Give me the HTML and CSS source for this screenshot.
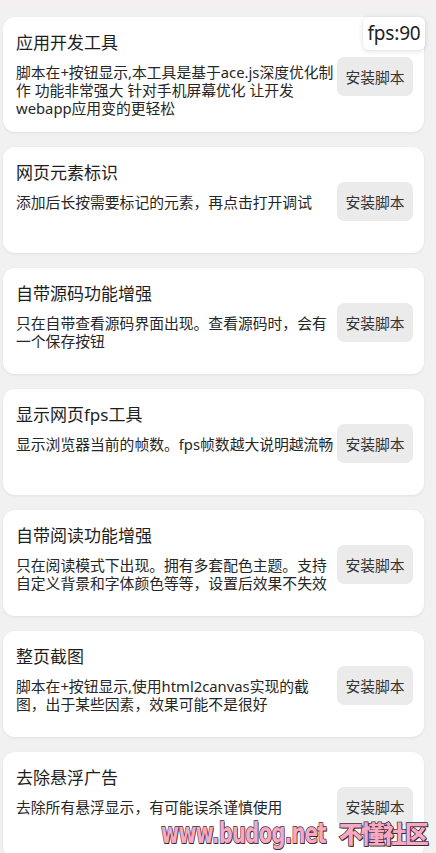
FILE: index.html
```html
<!DOCTYPE html>
<html lang="zh-CN">
<head>
    <meta charset="UTF-8">
    <meta name="viewport" content="width=device-width, initial-scale=1.0">
    <title>脚本列表</title>
    <link rel="stylesheet" href="styles.css">
</head>
<body>
    <div class="topline"></div>
    <div class="fps">fps:90</div>
    <div class="list">
        <div class="card">
            <div class="info">
                <h3 class="title">应用开发工具</h3>
                <p class="desc">脚本在+按钮显示,本工具是基于ace.js深度优化制作 功能非常强大 针对手机屏幕优化 让开发webapp应用变的更轻松</p>
            </div>
            <button class="install">安装脚本</button>
        </div>
        <div class="card">
            <div class="info">
                <h3 class="title">网页元素标识</h3>
                <p class="desc">添加后长按需要标记的元素，再点击打开调试</p>
            </div>
            <button class="install">安装脚本</button>
        </div>
        <div class="card">
            <div class="info">
                <h3 class="title">自带源码功能增强</h3>
                <p class="desc">只在自带查看源码界面出现。查看源码时，会有一个保存按钮</p>
            </div>
            <button class="install">安装脚本</button>
        </div>
        <div class="card">
            <div class="info">
                <h3 class="title">显示网页fps工具</h3>
                <p class="desc">显示浏览器当前的帧数。fps帧数越大说明越流畅</p>
            </div>
            <button class="install">安装脚本</button>
        </div>
        <div class="card">
            <div class="info">
                <h3 class="title">自带阅读功能增强</h3>
                <p class="desc">只在阅读模式下出现。拥有多套配色主题。支持自定义背景和字体颜色等等，设置后效果不失效</p>
            </div>
            <button class="install">安装脚本</button>
        </div>
        <div class="card">
            <div class="info">
                <h3 class="title">整页截图</h3>
                <p class="desc">脚本在+按钮显示,使用html2canvas实现的截图，出于某些因素，效果可能不是很好</p>
            </div>
            <button class="install">安装脚本</button>
        </div>
        <div class="card">
            <div class="info">
                <h3 class="title">去除悬浮广告</h3>
                <p class="desc">去除所有悬浮显示，有可能误杀谨慎使用</p>
            </div>
            <button class="install">安装脚本</button>
        </div>
    </div>
    <div class="watermark"><span class="wm-site">www.budog.net</span><span class="wm-name">不懂社区</span></div>
</body>
</html>
```

FILE: styles.css
```css
body {
    margin: 0;
    padding: 0;
    background-color: #f1f1f1;
    font-family: "Noto Sans", "Noto Sans CJK SC", sans-serif;
    color: #222;
    overflow: hidden;
}
.topline {
    height: 4px;
    background-color: #f6eef0;
}
.list {
    padding: 13px 12px 0 3px;
}
.card {
    display: flex;
    align-items: center;
    min-height: 106px;
    box-sizing: border-box;
    margin-bottom: 15px;
    padding: 15px 11px 15px 13px;
    background-color: #fff;
    border-radius: 12px;
    box-shadow: 0 1px 3px rgba(0,0,0,0.07);
}
.info {
    flex: 1;
    align-self: flex-start;
    min-width: 0;
    margin-right: 2px;
}
.title {
    margin: 0;
    font-size: 17px;
    font-weight: normal;
    line-height: 22px;
    color: #1e1e1e;
}
.desc {
    margin: 9px 0 0;
    font-size: 14.8px;
    line-height: 18px;
    color: #262626;
}
.install {
    flex: none;
    width: 76px;
    height: 39px;
    margin-top: 3px;
    padding: 0;
    border: none;
    border-radius: 7px;
    background-color: #ebebeb;
    font-family: inherit;
    font-size: 14.8px;
    color: #333;
}
.fps {
    position: absolute;
    top: 17px;
    right: 11px;
    width: 62px;
    height: 33px;
    line-height: 33px;
    text-align: center;
    background-color: #fff;
    border-radius: 6px;
    box-shadow: 0 1px 5px rgba(0,0,0,0.15);
    font-size: 19px;
    letter-spacing: -0.2px;
    color: #222;
    z-index: 2;
}
.watermark {
    position: absolute;
    left: 161px;
    top: 815px;
    white-space: nowrap;
    font-weight: 900;
    color: #f7a9c4;
    -webkit-text-stroke: 1.4px #3a2a30;
    paint-order: stroke fill;
    text-shadow: 1px 1px 0 #3a2a30;
    z-index: 3;
}
.wm-site {
    display: inline-block;
    font-family: "DejaVu Sans", sans-serif;
    font-size: 28px;
    letter-spacing: -1px;
    transform: scaleX(0.7);
    transform-origin: left center;
    margin-right: -71px;
}
.wm-name {
    display: inline-block;
    font-family: "Noto Sans CJK SC", sans-serif;
    font-size: 24px;
    letter-spacing: -2px;
    margin-left: 13px;
}
```
